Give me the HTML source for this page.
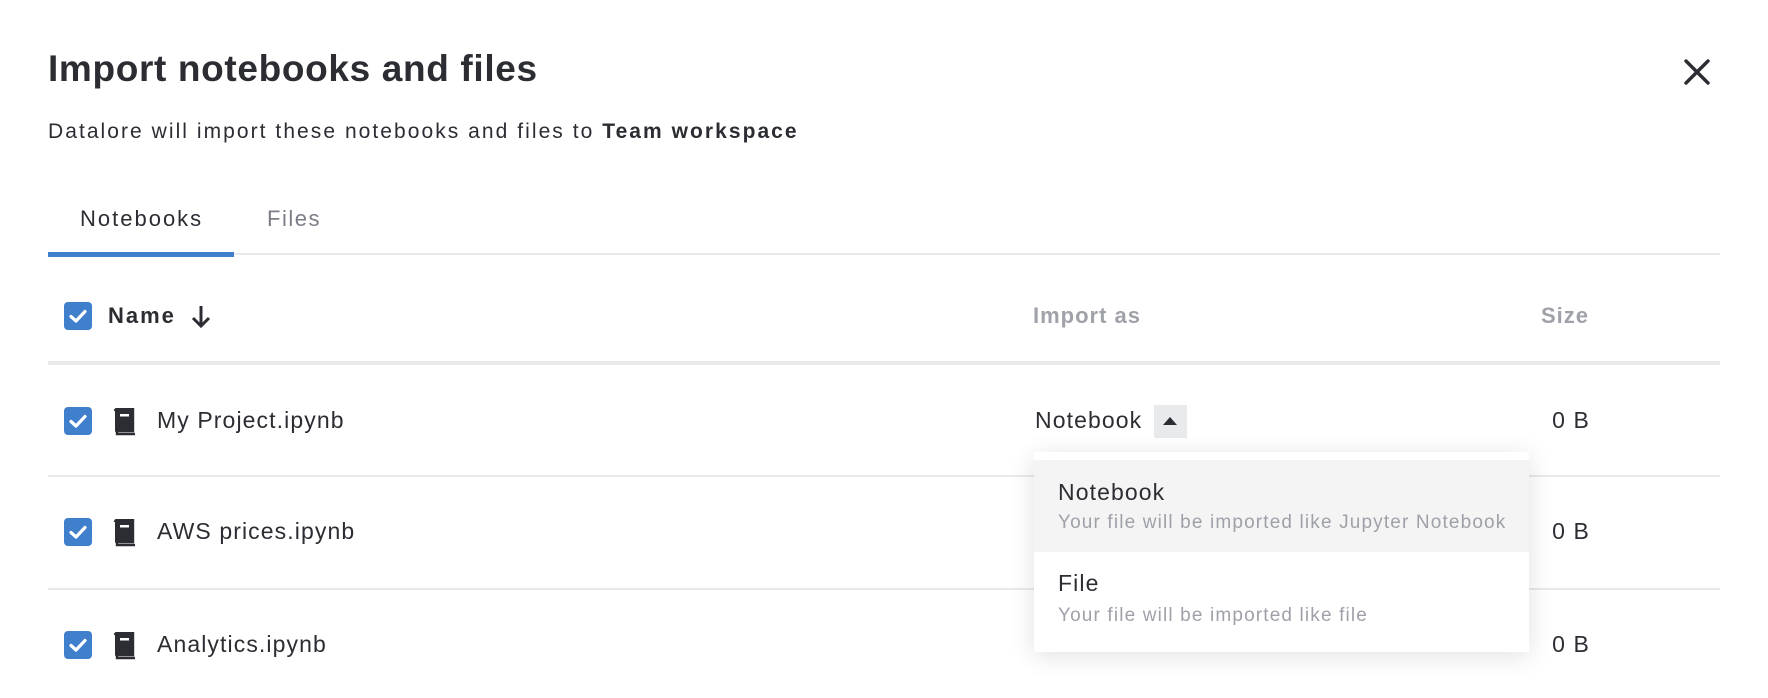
<!DOCTYPE html>
<html><head><meta charset="utf-8"><style>
*{margin:0;padding:0;box-sizing:border-box}
body{width:1768px;height:698px;background:#fff;font-family:"Liberation Sans",Arial,sans-serif;color:#2b2d33;position:relative;overflow:hidden}
.a{position:absolute;white-space:nowrap}
.t{line-height:1;}
.r{font-size:23px;letter-spacing:1.1px}
.cb{position:absolute;width:28px;height:28px;background:#3f7fcc;border-radius:4px;left:64px}
.cb svg{position:absolute;left:0;top:0}
.line{position:absolute;left:48px;width:1672px;background:#e8e9eb}
.bk{position:absolute;left:112px}
</style></head><body>
<div class="a t" style="left:48px;top:50px;font-size:37px;font-weight:bold;letter-spacing:0.65px">Import notebooks and files</div>
<svg class="a" style="left:1684px;top:59px" width="26" height="26" viewBox="0 0 26 26"><path d="M2 2L24 24M24 2L2 24" stroke="#2b2d33" stroke-width="3.4" stroke-linecap="round"/></svg>
<div class="a t" style="left:48px;top:121px;font-size:21px;letter-spacing:2.05px">Datalore will import these notebooks and files to <b>Team workspace</b></div>
<div class="a t" style="left:80px;top:208px;font-size:22px;letter-spacing:2px">Notebooks</div>
<div class="a t" style="left:267px;top:208px;font-size:22px;letter-spacing:1.5px;color:#7b7e87">Files</div>
<div class="line" style="top:253px;height:2px"></div>
<div class="a" style="left:48px;top:252px;width:186px;height:5px;background:#3f7fcc"></div>

<div class="cb" style="top:302px"><svg width="28" height="28"><path d="M7 14.5L12 19L21 9.5" stroke="#fff" stroke-width="3.2" fill="none" stroke-linecap="round" stroke-linejoin="round"/></svg></div>
<div class="a t" style="left:108px;top:305px;font-size:22px;font-weight:bold;letter-spacing:2px">Name</div>
<svg class="a" style="left:190px;top:304px" width="22" height="26" viewBox="0 0 22 26"><path d="M11 2V22M3 14L11 22L19 14" stroke="#2b2d33" stroke-width="3" fill="none"/></svg>
<div class="a t" style="left:1033px;top:305px;font-size:22px;font-weight:bold;letter-spacing:1px;color:#a0a2aa">Import as</div>
<div class="a t" style="right:179px;top:305px;font-size:22px;font-weight:bold;letter-spacing:1px;color:#a0a2aa">Size</div>
<div class="line" style="top:361px;height:4px"></div>

<div class="cb" style="top:407px"><svg width="28" height="28"><path d="M7 14.5L12 19L21 9.5" stroke="#fff" stroke-width="3.2" fill="none" stroke-linecap="round" stroke-linejoin="round"/></svg></div>
<svg class="bk" style="top:408px" width="24" height="28" viewBox="0 0 24 28"><path d="M3 3a2 2 0 0 1 2-2h16v22H5v3h18" stroke="#2b2d33" stroke-width="2.4" fill="none"/><path d="M3 3a2 2 0 0 1 2-2h16v22H5a2 2 0 0 0-2 2z" fill="#2b2d33"/><rect x="8" y="6" width="9" height="2.5" fill="#fff"/></svg>
<div class="a t r" style="left:157px;top:409px">My Project.ipynb</div>
<div class="a t r" style="left:1035px;top:409px">Notebook</div>
<div class="a" style="left:1154px;top:405px;width:33px;height:33px;background:#e9eaec"></div>
<svg class="a" style="left:1162px;top:416px" width="16" height="10"><path d="M1 9L8 1L15 9Z" fill="#2b2d33"/></svg>
<div class="a t r" style="right:178px;top:409px">0 B</div>
<div class="line" style="top:475px;height:2px"></div>

<div class="cb" style="top:518px"><svg width="28" height="28"><path d="M7 14.5L12 19L21 9.5" stroke="#fff" stroke-width="3.2" fill="none" stroke-linecap="round" stroke-linejoin="round"/></svg></div>
<svg class="bk" style="top:519px" width="24" height="28" viewBox="0 0 24 28"><path d="M3 3a2 2 0 0 1 2-2h16v22H5v3h18" stroke="#2b2d33" stroke-width="2.4" fill="none"/><path d="M3 3a2 2 0 0 1 2-2h16v22H5a2 2 0 0 0-2 2z" fill="#2b2d33"/><rect x="8" y="6" width="9" height="2.5" fill="#fff"/></svg>
<div class="a t r" style="left:157px;top:520px">AWS prices.ipynb</div>
<div class="a t r" style="right:178px;top:520px">0 B</div>
<div class="line" style="top:588px;height:2px"></div>

<div class="cb" style="top:631px"><svg width="28" height="28"><path d="M7 14.5L12 19L21 9.5" stroke="#fff" stroke-width="3.2" fill="none" stroke-linecap="round" stroke-linejoin="round"/></svg></div>
<svg class="bk" style="top:632px" width="24" height="28" viewBox="0 0 24 28"><path d="M3 3a2 2 0 0 1 2-2h16v22H5v3h18" stroke="#2b2d33" stroke-width="2.4" fill="none"/><path d="M3 3a2 2 0 0 1 2-2h16v22H5a2 2 0 0 0-2 2z" fill="#2b2d33"/><rect x="8" y="6" width="9" height="2.5" fill="#fff"/></svg>
<div class="a t r" style="left:157px;top:633px">Analytics.ipynb</div>
<div class="a t r" style="left:1035px;top:633px">Notebook</div>
<div class="a t r" style="right:178px;top:633px">0 B</div>

<div class="a" style="left:1034px;top:452px;width:495px;height:200px;background:#fff;box-shadow:0 4px 24px rgba(0,0,0,0.12)">
 <div style="position:absolute;left:0;top:8px;width:495px;height:92px;background:#f4f4f5"></div>
 <div class="a t r" style="left:24px;top:29px">Notebook</div>
 <div class="a t" style="left:24px;top:61px;font-size:19px;letter-spacing:1.15px;color:#9fa1a9">Your file will be imported like Jupyter Notebook</div>
 <div class="a t r" style="left:24px;top:120px">File</div>
 <div class="a t" style="left:24px;top:154px;font-size:19px;letter-spacing:1.15px;color:#9fa1a9">Your file will be imported like file</div>
</div>
</body></html>
